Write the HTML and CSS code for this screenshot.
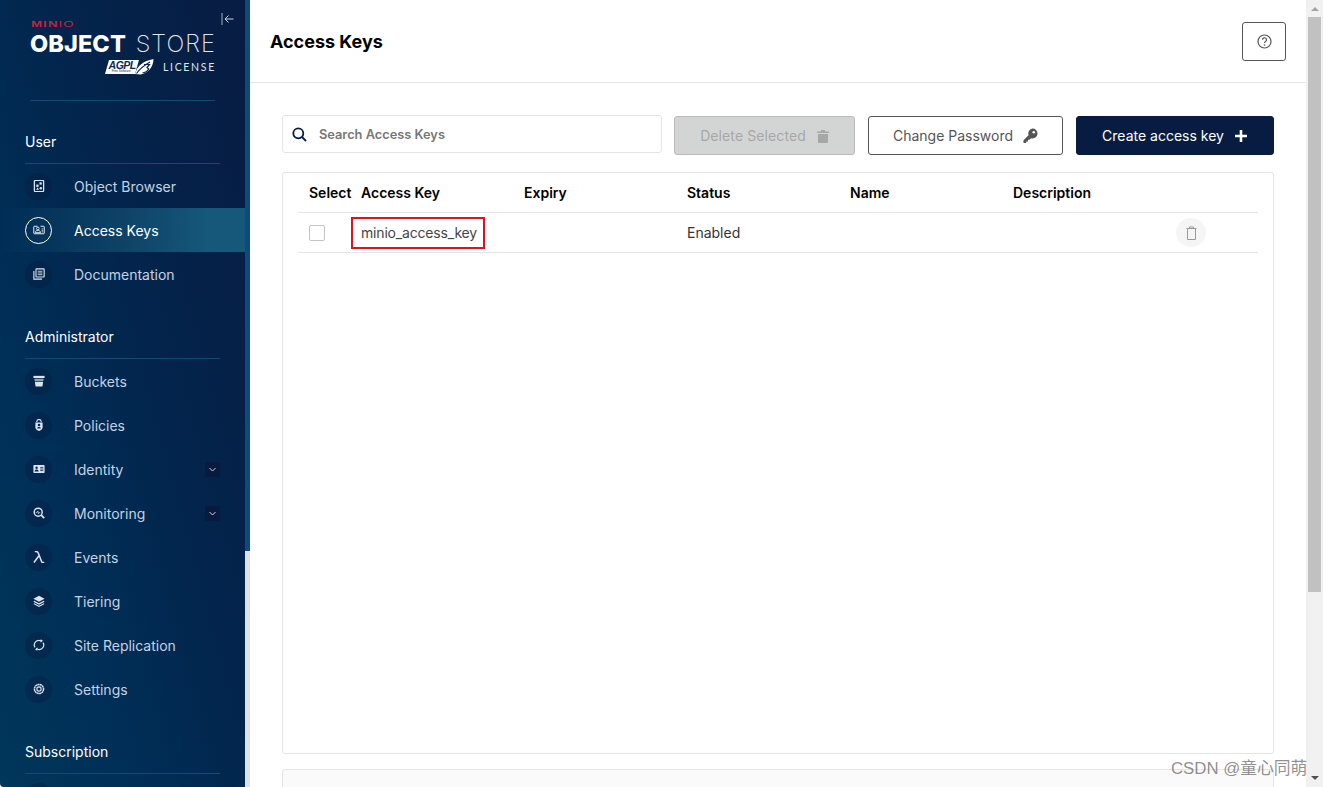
FILE: index.html
```html
<!DOCTYPE html>
<html lang="en">
<head>
<meta charset="utf-8">
<title>Access Keys</title>
<link rel="stylesheet" href="styles.css">
</head>
<body>
<div class="app">
  <aside class="side">
    <div class="side-inner">
      <button class="collapse" aria-label="Collapse">
        <svg width="13" height="12" viewBox="0 0 13 12"><path d="M1 0v12" stroke="#9fb2c6" fill="none"/><path d="M12.500 6H4M7.500 2.500 4 6l3.500 3.500" stroke="#c9d5e0" fill="none"/></svg>
      </button>
      <div class="brand">
        <div class="brand-minio"><b>MIN</b><span>IO</span></div>
        <div class="brand-name"><b>OBJECT</b> <span>STORE</span></div>
        <div class="brand-lic">
          <span class="agpl"><i>AGPL</i><small>Free Software</small></span>
          <svg class="agpl-leaf" width="19" height="18" viewBox="0 0 19 18"><path d="M0 16C2 8 8 3 18.500 1c-.2 8-5 14-13 15.500z" fill="#fff"/><path d="M1.500 15.500C4.500 11 8 8 15 4" fill="none" stroke="#0a2550" stroke-width="1.100"/><path d="M9 6.500h5.500l-2.500 3 1.800 1.500-2.500 2.800L7.500 15" fill="none" stroke="#0a2550" stroke-width="1.200"/></svg>
          <span class="lic-text">LICENSE</span>
        </div>
      </div>

      <h3 class="sec first">User</h3>
      <a class="item"><span class="ic"><svg viewBox="1 .5 12 13"><rect x="2" y="1" width="10" height="12" rx="1" fill="none" stroke="#dce6ef" stroke-width="1.400"/><rect x="7.500" y="3" width="2.500" height="2.500" fill="#dce6ef"/><rect x="4" y="5.500" width="2.500" height="2.500" fill="#dce6ef"/><path d="m5.500 8.500 1.700 2.500H3.800z" fill="#dce6ef"/><circle cx="9" cy="9.500" r="1.300" fill="#dce6ef"/></svg></span>Object Browser</a>
      <a class="item active"><span class="ic"><svg viewBox="0 0 16 14"><path d="M6 2H2a1 1 0 0 0-1 1v8a1 1 0 0 0 1 1h12a1 1 0 0 0 1-1V3a1 1 0 0 0-1-1h-4" fill="none" stroke="#fff" stroke-width="1.200"/><circle cx="6.500" cy="5" r="1.800" fill="none" stroke="#fff" stroke-width="1.100"/><path d="M3 10.500c0-2 1.500-3 3.500-3s3.500 1 3.500 3z" fill="none" stroke="#fff" stroke-width="1.100"/><path d="M11.500 5.500h2M11.500 7.500h2M11.500 9.500h2" stroke="#fff"/></svg></span>Access Keys</a>
      <a class="item"><span class="ic"><svg viewBox="0 0 14 14"><path d="M1 3.500V13h9.500" fill="none" stroke="#dce6ef" stroke-width="1.300"/><rect x="3.500" y="1" width="9.500" height="9.500" rx=".6" fill="none" stroke="#dce6ef" stroke-width="1.300"/><path d="M5.500 3.800h5.500M5.500 5.800h5.500M5.500 7.800h5.500" stroke="#dce6ef"/></svg></span>Documentation</a>

      <h3 class="sec">Administrator</h3>
      <a class="item"><span class="ic"><svg viewBox="0 0 14 14"><path d="M0.500 1h13v2.500h-13z" fill="#dce6ef"/><path d="M1.500 4.500h11L12 7H2z" fill="#8fa3b8"/><path d="M2.200 8h9.600l-.8 5.500H3z" fill="#dce6ef"/></svg></span>Buckets</a>
      <a class="item"><span class="ic"><svg viewBox="0 0 14 14"><path d="M4.500 3.500V3a2.500 2.500 0 0 1 5 0v.5" fill="none" stroke="#dce6ef" stroke-width="1.200"/><path d="M2.800 4h8.400v6c0 2-2.500 3.500-4.200 4-1.700-.5-4.200-2-4.200-4z" fill="#dce6ef"/><circle cx="7" cy="7" r="1.600" fill="#0a2550"/><path d="M4.800 11c.3-1.300 1.200-1.800 2.200-1.800s1.900.5 2.200 1.800z" fill="#0a2550"/></svg></span>Policies</a>
      <a class="item has-sub"><span class="ic"><svg viewBox="0 0 15 12"><rect x=".5" y="1" width="14" height="10" rx="1" fill="#dce6ef"/><circle cx="4.500" cy="4.500" r="1.500" fill="#0a2550"/><path d="M2 9c.2-1.700 1.200-2.300 2.500-2.300S6.800 7.300 7 9z" fill="#0a2550"/><path d="M9 4h4M9 6h4M9 8h4" stroke="#0a2550"/></svg></span>Identity<span class="chev"><svg width="7" height="5" viewBox="0 0 7 5"><path d="m.5 1 3 3 3-3" fill="none" stroke="#c9d5e0"/></svg></span></a>
      <a class="item has-sub"><span class="ic"><svg viewBox="0 0 15 15"><circle cx="6.500" cy="6.500" r="5" fill="none" stroke="#dce6ef" stroke-width="1.800"/><path d="m10.300 10.300 3.700 3.700" stroke="#dce6ef" stroke-width="2.200"/><path d="M3.500 7h1.500l1-2 1 3.500.8-1.500h1.200" fill="none" stroke="#dce6ef" stroke-width=".9"/></svg></span>Monitoring<span class="chev"><svg width="7" height="5" viewBox="0 0 7 5"><path d="m.5 1 3 3 3-3" fill="none" stroke="#c9d5e0"/></svg></span></a>
      <a class="item"><span class="ic"><svg viewBox="1.500 1 11.500 12"><path d="M3 1.500h1.500c1.200 0 1.700.6 2.100 1.700L10.200 12.500M7 6l-4.800 6.500" fill="none" stroke="#dce6ef" stroke-width="1.500"/><path d="M10 12.500h2.500" stroke="#dce6ef" stroke-width="1.500"/></svg></span>Events</a>
      <a class="item"><span class="ic"><svg viewBox="0 0 14 14"><path d="M7 1 13.500 4.500 7 8 .5 4.500z" fill="#dce6ef"/><path d="M1.500 6.800 7 9.700l5.500-2.900 1 1L7 11.300.5 7.800z" fill="#dce6ef"/><path d="M1.500 9.500 7 12.400l5.500-2.900 1 1L7 14 .5 10.500z" fill="#dce6ef"/></svg></span>Tiering</a>
      <a class="item"><span class="ic"><svg viewBox="0 0 14 14"><path d="M2.300 9.800A5.300 5.300 0 0 1 7 1.700c1 0 1.900.3 2.700.8" fill="none" stroke="#dce6ef" stroke-width="1.400"/><path d="M11.700 4.200A5.300 5.300 0 0 1 7 12.300c-1 0-1.900-.3-2.700-.8" fill="none" stroke="#dce6ef" stroke-width="1.400"/><path d="M9 .2v4.300l2.500-2.700zM5 13.800V9.500l-2.500 2.700z" fill="#dce6ef"/></svg></span>Site Replication</a>
      <a class="item"><span class="ic"><svg viewBox="0 0 14 14"><circle cx="7" cy="7" r="5.300" fill="none" stroke="#dce6ef" stroke-width="1.700" stroke-dasharray="2.400 .4"/><circle cx="7" cy="7" r="2.500" fill="none" stroke="#dce6ef" stroke-width="1.300"/></svg></span>Settings</a>

      <h3 class="sec">Subscription</h3>
      <a class="item"><span class="ic"></span></a>
    </div>
    <div class="side-scroll"><div class="side-thumb"></div></div>
  </aside>

  <main class="main">
    <header class="top">
      <h1>Access Keys</h1>
      <button class="help" aria-label="Help"><svg width="15" height="15" viewBox="0 0 15 15"><circle cx="7.500" cy="7.500" r="6.500" fill="none" stroke="#555" stroke-width="1.200"/><path d="M5.500 5.800a2 2 0 1 1 3 1.700c-.7.400-1 .8-1 1.500" fill="none" stroke="#555" stroke-width="1.200"/><circle cx="7.500" cy="11" r=".8" fill="#555"/></svg></button>
    </header>
    <section class="content">
      <div class="actions">
        <label class="search">
          <svg width="15" height="15" viewBox="0 0 15 15"><circle cx="6.300" cy="6.300" r="5" fill="none" stroke="#081c42" stroke-width="1.800"/><path d="m10 10 4 4" stroke="#081c42" stroke-width="1.800"/></svg>
          <input type="text" placeholder="Search Access Keys">
        </label>
        <button class="btn btn-off">Delete Selected
          <svg width="12" height="14" viewBox="0 0 12 14"><path d="M0 2.500h12V4H0zM4 1h4v1.500H4z" fill="#a6a8a8"/><path d="M1 5h10v8a1 1 0 0 1-1 1H2a1 1 0 0 1-1-1z" fill="#a6a8a8"/></svg>
        </button>
        <button class="btn btn-line">Change Password
          <svg width="15" height="15" viewBox="0 0 15 15"><path d="M9.500.5a5 5 0 0 1 0 10c-.5 0-1-.1-1.500-.2L6.500 11.800H5v1.700H3.200V15H.5v-2.800l5-5a5 5 0 0 1 4-6.700z" fill="#555"/><circle cx="10.800" cy="4.200" r="1.300" fill="#fff"/></svg>
        </button>
        <button class="btn btn-main">Create access key
          <svg width="14" height="14" viewBox="0 0 14 14"><path d="M7 1v12M1 7h12" stroke="#fff" stroke-width="2.600"/></svg>
        </button>
      </div>
      <div class="table">
        <div class="row head">
          <div class="c-sel">Select</div><div>Access Key</div><div>Expiry</div><div>Status</div><div>Name</div><div>Description</div>
        </div>
        <div class="row body">
          <div class="c-sel"><span class="check"></span></div>
          <div><span class="mark">minio_access_key</span></div><div></div><div>Enabled</div><div></div><div></div>
          <div class="c-act"><span class="del"><svg width="11" height="14" viewBox="0 0 11 14"><path d="M.5 2.500h10M3.500 2.500V1h4v1.500" fill="none" stroke="#9a9a9a"/><path d="M1.500 2.500h8v11h-8z" fill="none" stroke="#9a9a9a"/></svg></span></div>
        </div>
      </div>
      <div class="lower"></div>
    </section>
  </main>

  <div class="scroll">
    <span class="arr up"></span>
    <div class="thumb"></div>
    <span class="arr down"></span>
  </div>
</div>
<div class="mark-wm">CSDN @童心同萌</div>
</body>
</html>
```
FILE: styles.css
```css
* { box-sizing: border-box; }
html, body { margin: 0; height: 787px; overflow: hidden; }
body { font-family: Inter, "Noto Sans", sans-serif; background: #fff; position: relative; }
.app { display: flex; height: 787px; background: #fff; }

/* sidebar */
.side { width: 250px; flex: none; display: flex; height: 787px; background: #dcdcdc; border-bottom-left-radius: 4px; overflow: hidden; }
.side-inner { width: 245px; flex: none; position: relative; background: linear-gradient(75deg, #00375a 0%, #002e56 30%, #03244c 60%, #081c42 100%); overflow: hidden; }
.side-scroll { width: 5px; background: #e1e1e1; }
.side-thumb { height: 551px; background: #0f4a78; }
.collapse { position: absolute; left: 221px; top: 13px; padding: 0; border: 0; background: none; display: flex; }
.brand { height: 101px; margin: 0 30px; border-bottom: 1px solid #124a73; padding-top: 20px; width: 185px; display: flex; flex-direction: column; }
.brand-minio { font-family: "Liberation Sans", sans-serif; font-size: 9.500px; line-height: 8px; color: #c8203c; letter-spacing: .8px; margin-left: 1px; transform-origin: left top; transform: scaleX(1.39); height: 9px; }
.brand-minio b { font-weight: 700; }
.brand-minio span { font-weight: 400; }
.brand-name { font-size: 23.500px; line-height: 22px; margin-top: 4px; color: #fff; white-space: nowrap; display: flex; justify-content: space-between; }
.brand-name b { font-weight: 800; letter-spacing: .1px; }
.brand-name span { font-weight: 200; color: #e3e7ec; letter-spacing: 1.100px; margin-right: -1px; }
.brand-lic { display: flex; align-items: center; justify-content: flex-end; height: 17px; margin-top: 3px; }
.agpl { background: #fff; width: 30px; height: 14px; transform: skewX(-16deg); display: flex; flex-direction: column; align-items: center; }
.agpl i { font: italic 700 10.500px/10px "Liberation Sans", sans-serif; color: #0b2a52; transform: skewX(16deg); letter-spacing: -.5px; }
.agpl small { font: 400 3px/3px "Liberation Sans", sans-serif; color: #0b2a52; transform: skewX(16deg); }
.agpl-leaf { margin-right: 9px; margin-left: -2px; }
.lic-text { font-family: Lato, sans-serif; font-size: 10.500px; letter-spacing: 1.700px; color: #dfe5ec; margin-right: -1px; }
.sec { margin: 30px 25px 0; padding: 0 0 10px; height: 33px; line-height: 22px; font-size: 14px; font-weight: 400; color: #fff; border-bottom: 1px solid #124a73; }
.item { display: flex; align-items: center; height: 44px; padding: 0 25px; font-size: 14px; color: #c3d3e3; }
.ic { width: 27px; height: 27px; flex: none; border-radius: 50%; background: rgba(8, 28, 66, .42); display: flex; align-items: center; justify-content: center; margin-right: 22px; }
.ic svg { width: 12px; height: 12px; }
.item.active { color: #fff; background: linear-gradient(90deg, rgba(21, 88, 122, 0) 0%, #15587a 85%); }
.item.active .ic { background: transparent; border: 1px solid #fff; }
.chev { margin-left: auto; width: 15px; height: 15px; background: #081a3e; border-radius: 2px; display: flex; align-items: center; justify-content: center; }

/* main */
.main { flex: 1; min-width: 0; height: 787px; overflow: hidden; }
.top { height: 83px; border-bottom: 1px solid #e5e5e5; display: flex; align-items: center; justify-content: space-between; padding: 0 20px; }
.top h1 { margin: 0; font-size: 18px; font-weight: 700; color: #000; }
.help { width: 44px; height: 39px; padding: 0; background: #fff; border: 1px solid #555; border-radius: 3px; display: flex; align-items: center; justify-content: center; }
.content { padding: 32px 32px 0; }
.actions { display: flex; align-items: flex-start; height: 57px; }
.search { width: 380px; height: 38px; border: 1px solid #e5e5e5; border-radius: 3px; display: flex; align-items: center; padding-left: 9px; margin-right: 12px; }
.search input { border: 0; outline: 0; padding: 0; margin-left: 12px; flex: 1; min-width: 0; font: 600 12.800px Inter, sans-serif; color: #333; background: none; }
.search input::placeholder { color: #777; opacity: 1; }
.btn { height: 39px; margin-top: 1px; padding: 0; border-radius: 3px; font: 400 14px Inter, sans-serif; display: flex; align-items: center; justify-content: center; gap: 10px; }
.btn-off { width: 181px; background: #d3d5d5; border: 1px solid #bbb; color: #a6a8a8; margin-right: 13px; letter-spacing: .1px; gap: 11px; }
.btn-line { width: 195px; background: #fff; border: 1px solid #555; color: #555; margin-right: 13px; }
.btn-main { width: 198px; background: #081c42; border: 1px solid #081c42; color: #fff; }
.table { height: 582px; border: 1px solid #e5e5e5; border-radius: 3px; padding: 0 15px; }
.row { display: grid; grid-template-columns: 63px 163px 163px 163px 163px 163px 1fr; height: 40px; align-items: center; border-bottom: 1px solid #e5e5e5; font-size: 14px; color: #333; }
.head { font-weight: 600; color: #000; height: 40px; }
.c-sel { padding-left: 11px; white-space: nowrap; }
.body { position: relative; }
.check { display: block; width: 16px; height: 16px; border: 1px solid #c4c4c4; border-radius: 2px; background: #fff; }
.mark { display: inline-block; margin-left: -10px; padding: 0 6px 0 8px; height: 32px; line-height: 28px; border: 2px solid #e3101f; letter-spacing: -.18px; color: #444; }
.c-act { position: absolute; left: 878px; top: 5px; }
.del { width: 30px; height: 29px; border-radius: 50%; background: #f5f5f5; display: flex; align-items: center; justify-content: center; }
.lower { margin-top: 15px; height: 60px; border: 1px solid #e5e5e5; background: #fbfafa; border-radius: 3px; }

/* page scrollbar */
.scroll { width: 17px; flex: none; height: 787px; background: #f1f1f1; position: relative; }
.thumb { position: absolute; left: 2px; right: 2px; top: 17px; height: 575px; background: #c1c1c1; }
.arr { position: absolute; left: 5px; width: 0; height: 0; border-left: 4px solid transparent; border-right: 4px solid transparent; }
.arr.up { top: 7px; border-bottom: 4px solid #a3a3a3; }
.arr.down { bottom: 7px; border-top: 4px solid #505050; }

.mark-wm { position: absolute; left: 1171px; top: 758px; font-family: "Liberation Sans", "Noto Sans CJK SC", sans-serif; font-size: 16.800px; line-height: 22px; color: rgba(80, 80, 80, .65); white-space: nowrap; }
```
